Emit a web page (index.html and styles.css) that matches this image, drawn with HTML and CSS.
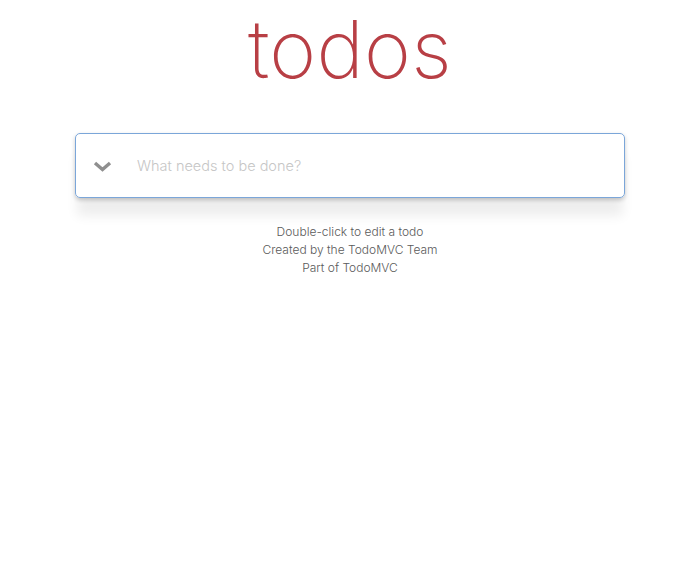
FILE: index.html
```html
<!DOCTYPE html>
<html lang="en">
<head>
<meta charset="utf-8">
<title>TodoMVC</title>
<link rel="stylesheet" href="styles.css">
</head>
<body>
<div class="page">
  <h1 class="title">todos</h1>
  <section class="todoapp">
    <div class="new-row">
      <span class="toggle-all">
        <svg width="19" height="11" viewBox="0 0 19 11"><polyline points="2,2 9.5,8.5 17,2" fill="none" stroke="#8f8f8f" stroke-width="3.4" stroke-linejoin="miter"/></svg>
      </span>
      <input class="new-todo" placeholder="What needs to be done?">
    </div>
  </section>
  <footer class="info">
    <p>Double-click to edit a todo</p>
    <p>Created by the TodoMVC Team</p>
    <p>Part of TodoMVC</p>
  </footer>
</div>
</body>
</html>
```
FILE: styles.css
```css
html { overflow: hidden; background: #fff; }
body { margin: 0; font-family: Inter, "Helvetica Neue", sans-serif; }
.page { width: 700px; display: flex; flex-direction: column; align-items: center; }
.title {
  margin: 9px 0 0;
  font-size: 80px;
  line-height: 80px;
  font-weight: 200;
  color: #b83f45;
  letter-spacing: 0.3px;
}
.todoapp {
  margin-top: 44px;
  width: 550px;
  border-radius: 5px;
  box-shadow: 0 2px 4px rgba(0,0,0,0.2), 0 20px 12px -2px rgba(0,0,0,0.07);
}
.new-row {
  height: 63px;
  border: 1px solid #7ba6d9;
  border-radius: 5px;
  background: #fff;
  display: flex;
  align-items: center;
}
.toggle-all { width: 53px; display: flex; justify-content: center; margin-top: 1px; }
.toggle-all svg { display: block; }
.new-todo {
  flex: 1;
  border: none;
  outline: none;
  font-family: Inter, sans-serif;
  font-size: 14.5px;
  font-weight: 300;
  padding: 0 0 0 8px;
  color: #4d4d4d;
  background: transparent;
}
.new-todo::placeholder { color: #c6c6c6; }
.info {
  margin-top: 25px;
  text-align: center;
  font-size: 12px;
  font-weight: 300;
  color: #5a5a5a;
  line-height: 18px;
}
.info p { margin: 0; }
```
